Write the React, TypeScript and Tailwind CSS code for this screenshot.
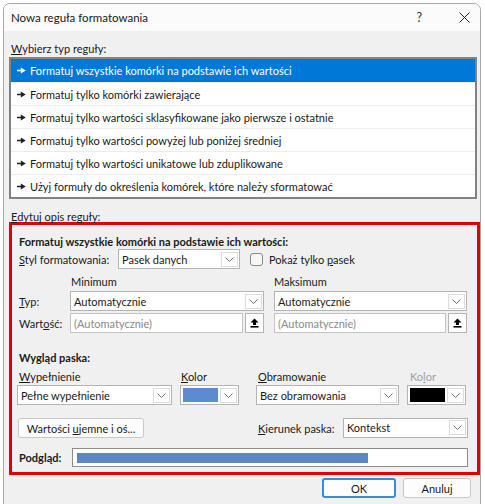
import React from 'react';

const font = { fontFamily: 'Lato, "Noto Sans", sans-serif' };

function Chevron() {
  return (
    <svg width="9" height="5" viewBox="0 0 9 5" className="text-[#707070]">
      <path d="M0.5 0.5 L4.5 4.5 L8.5 0.5" fill="none" stroke="currentColor" strokeWidth="1" />
    </svg>
  );
}

function ArrowBox() {
  return (
    <span className="mr-[1px] flex h-[15px] w-[17px] shrink-0 items-center justify-center border border-[#dcdcdc] bg-white">
      <Chevron />
    </span>
  );
}

function Select({ value, className = '' }: { value: string; className?: string }) {
  return (
    <div className={`flex h-[20px] items-center border border-[#b4b4b4] bg-white ${className}`}>
      <span className="flex-1 truncate pl-[3px] text-[#1a1a1a]">{value}</span>
      <ArrowBox />
    </div>
  );
}

function ColorPick({ color, className = '' }: { color: string; className?: string }) {
  return (
    <div className={`flex h-[20px] w-[59px] items-center border border-[#b4b4b4] bg-white ${className}`}>
      <span className="mx-[2px] h-[14px] flex-1" style={{ background: color }} />
      <ArrowBox />
    </div>
  );
}

function Upload() {
  return (
    <span className="flex h-[20px] w-[19px] shrink-0 items-center justify-center border border-[#b4b4b4] bg-white">
      <svg width="9" height="10" viewBox="0 0 9 10">
        <path d="M4.5 0.5 L8.5 4.5 L6 4.5 L6 7 L3 7 L3 4.5 L0.5 4.5 Z" fill="#000" />
        <rect x="0.5" y="8" width="8" height="1.6" fill="#000" />
      </svg>
    </span>
  );
}

function ValueInput({ className = '' }: { className?: string }) {
  return (
    <div className={`flex h-[20px] gap-[2px] ${className}`}>
      <div className="flex flex-1 items-center border border-[#c4c4c4] bg-white pl-[3px] text-[#8a8a8a]">
        (Automatycznie)
      </div>
      <Upload />
    </div>
  );
}

function ListArrow({ white }: { white?: boolean }) {
  return (
    <svg width="9" height="7" viewBox="0 0 9 7" className="mr-[4px] shrink-0">
      <path d="M0 3.5 H5" stroke={white ? '#fff' : '#222'} strokeWidth="1.4" />
      <path d="M3.8 0.5 L8.8 3.5 L3.8 6.5 Z" fill={white ? '#fff' : '#222'} />
    </svg>
  );
}

const rules = [
  'Formatuj wszystkie komórki na podstawie ich wartości',
  'Formatuj tylko komórki zawierające',
  'Formatuj tylko wartości sklasyfikowane jako pierwsze i ostatnie',
  'Formatuj tylko wartości powyżej lub poniżej średniej',
  'Formatuj tylko wartości unikatowe lub zduplikowane',
  'Użyj formuły do określenia komórek, które należy sformatować',
];

export default function App() {
  return (
    <div
      className="h-[504px] w-[485px] overflow-hidden whitespace-nowrap bg-white pl-[3px] pt-[3px] text-[11px] leading-[15px] text-[#1a1a1a]"
      style={font}
    >
      <div className="relative h-[510px] w-[478px] overflow-hidden rounded-t-[7px] border border-[#a8a8a8] bg-[#f0f0f0]">
        {/* title bar */}
        <div className="flex h-[27px] items-center bg-[#fbfbfb] pl-[7px] text-[11.5px]">
          <span className="flex-1">Nowa reguła formatowania</span>
          <span className="mr-[37px] text-[12.5px] text-[#333]">?</span>
          <svg width="11" height="11" viewBox="0 0 11 11" className="mr-[10px]">
            <path d="M0.5 0.5 L10.5 10.5 M10.5 0.5 L0.5 10.5" stroke="#222" strokeWidth="1" />
          </svg>
        </div>

        <div className="px-[5px]">
          <div className="mt-[10px] pl-[2px]">
            <span className="underline">W</span>ybierz typ reguły:
          </div>

          {/* rule type list */}
          <div className="mt-[1px] h-[142px] w-[468px] border-2 border-[#828282] bg-white">
            {rules.map((r, i) => (
              <div
                key={r}
                className={`flex h-[23px] items-center pl-[6px] ${
                  i === 0 ? 'bg-[#0078d7] text-white' : 'border-t border-[#ececec]'
                }`}
              >
                <ListArrow white={i === 0} />
                <span>{r}</span>
              </div>
            ))}
          </div>

          <div className="relative z-10 mt-[10px] pl-[2px]">
            <span className="underline">E</span>dytuj opis reguły:
          </div>

          {/* rule description (highlighted) */}
          <div className="mt-[-2px] h-[253px] w-[471px] border-[3px] border-[#e30000] pl-[7px] pr-[8px]">
            <div className="mt-[9px] font-bold">Formatuj wszystkie komórki na podstawie ich wartości:</div>

            <div className="flex h-[20px] items-center">
              <span className="w-[99px]">
                <span className="underline">S</span>tyl formatowania:
              </span>
              <Select value="Pasek danych" className="w-[122px]" />
              <span className="ml-[10px] mr-[6px] h-[13px] w-[13px] rounded-[3px] border border-[#8a8a8a] bg-[#f6f6f6]" />
              <span>
                Pokaż tylko <span className="underline">p</span>asek
              </span>
            </div>

            <div className="mt-[5px] flex">
              <span className="w-[52px]" />
              <span className="w-[203px]">Minimum</span>
              <span>Maksimum</span>
            </div>

            <div className="mt-[2px] flex items-center">
              <span className="w-[51px]">
                <span className="underline">T</span>yp:
              </span>
              <Select value="Automatycznie" className="w-[194px]" />
              <Select value="Automatycznie" className="ml-[10px] w-[193px]" />
            </div>

            <div className="mt-[2px] flex items-center">
              <span className="w-[51px]">
                Wart<span className="underline">o</span>ść:
              </span>
              <ValueInput className="w-[194px]" />
              <ValueInput className="ml-[10px] w-[193px]" />
            </div>

            <div className="mt-[17px] font-bold">Wygląd paska:</div>

            <div className="mt-[4px] flex">
              <span className="w-[162px]">
                <span className="underline">W</span>ypełnienie
              </span>
              <span className="w-[77px]">
                <span className="underline">K</span>olor
              </span>
              <span className="w-[152px]">
                <span className="underline">O</span>bramowanie
              </span>
              <span className="text-[#a0a0a0]">
                Ko<span className="underline">l</span>or
              </span>
            </div>

            <div className="mt-[1px] flex items-center">
              <Select value="Pełne wypełnienie" className="ml-[-2px] w-[155px]" />
              <ColorPick color="#5b8bd1" className="ml-[8px]" />
              <Select value="Bez obramowania" className="ml-[17px] w-[143px]" />
              <ColorPick color="#000000" className="ml-[8px]" />
            </div>

            <div className="mt-[13px] flex items-center">
              <button className="ml-[-1px] flex h-[20px] w-[126px] items-center justify-center rounded-[3px] border border-[#c8c8c8] bg-[#fdfdfd]">
                Wartości&nbsp;<span className="underline">u</span>jemne i oś...
              </button>
              <span className="ml-[114px] w-[85px]">
                <span className="underline">K</span>ierunek paska:
              </span>
              <Select value="Kontekst" className="mt-[-1px] w-[125px]" />
            </div>

            <div className="mt-[10px] flex items-center">
              <span className="w-[53px] font-bold">Podgląd:</span>
              <div className="flex h-[19px] w-[396px] items-center border border-[#8c8c8c] bg-white pl-[4px]">
                <div className="h-[10px] w-[291px] bg-[#5b87c5]" />
              </div>
            </div>
          </div>

          {/* footer buttons */}
          <div className="mt-[3px] flex justify-end gap-[7px] pr-[4px]">
            <button className="flex h-[20px] w-[74px] items-center justify-center rounded-[3px] border-2 border-[#3b8bd8] bg-[#fdfdfd]">
              OK
            </button>
            <button className="flex h-[20px] w-[68px] items-center justify-center rounded-[3px] border border-[#c8c8c8] bg-[#fdfdfd]">
              Anuluj
            </button>
          </div>
        </div>
      </div>
    </div>
  );
}
